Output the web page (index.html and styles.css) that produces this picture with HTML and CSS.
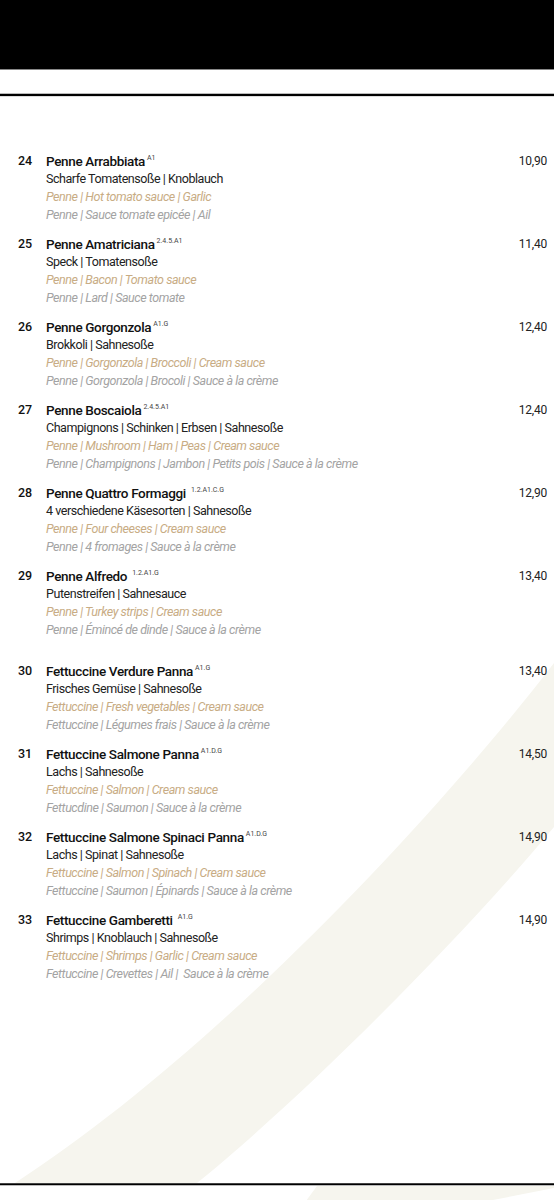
FILE: index.html
```html
<!DOCTYPE html>
<html lang="de">
<head>
    <meta charset="UTF-8">
    <meta name="viewport" content="width=device-width, initial-scale=1.0">
    <title>Pasta</title>
    <link rel="stylesheet" href="styles.css">
</head>
<body>
    <div class="page">
        <svg class="swoosh" width="554" height="1220" viewBox="0 0 554 1220" aria-hidden="true">
            <path d="M554,663 C434,819 215,1053 15,1183 L197,1183 C300,1100 460,940 554,827 Z" fill="#f6f5ee"/>
            <path d="M317,1186 L554,1186 L554,1188 L493,1200 L488,1220 L292,1220 Z" fill="#f6f5ee"/>
        </svg>

        <header class="topbar"></header>
        <div class="rule"></div>

        <main class="menu">
            <section class="group">
                <div class="dish">
                    <span class="num">24</span>
                    <div class="info">
                        <h3 class="name">Penne Arrabbiata<sup>A1</sup></h3>
                        <p class="de">Scharfe Tomatensoße | Knoblauch</p>
                        <p class="en">Penne | Hot tomato sauce | Garlic</p>
                        <p class="fr">Penne | Sauce tomate epicée | Ail</p>
                    </div>
                    <span class="price">10,90</span>
                </div>
                <div class="dish">
                    <span class="num">25</span>
                    <div class="info">
                        <h3 class="name">Penne Amatriciana<sup>2.4.5.A1</sup></h3>
                        <p class="de">Speck | Tomatensoße</p>
                        <p class="en">Penne | Bacon | Tomato sauce</p>
                        <p class="fr">Penne | Lard | Sauce tomate</p>
                    </div>
                    <span class="price">11,40</span>
                </div>
                <div class="dish">
                    <span class="num">26</span>
                    <div class="info">
                        <h3 class="name">Penne Gorgonzola<sup>A1.G</sup></h3>
                        <p class="de">Brokkoli | Sahnesoße</p>
                        <p class="en">Penne | Gorgonzola | Broccoli | Cream sauce</p>
                        <p class="fr">Penne | Gorgonzola | Brocoli | Sauce à la crème</p>
                    </div>
                    <span class="price">12,40</span>
                </div>
                <div class="dish">
                    <span class="num">27</span>
                    <div class="info">
                        <h3 class="name">Penne Boscaiola<sup>2.4.5.A1</sup></h3>
                        <p class="de">Champignons | Schinken | Erbsen | Sahnesoße</p>
                        <p class="en">Penne | Mushroom | Ham | Peas | Cream sauce</p>
                        <p class="fr">Penne | Champignons | Jambon | Petits pois | Sauce à la crème</p>
                    </div>
                    <span class="price">12,40</span>
                </div>
                <div class="dish">
                    <span class="num">28</span>
                    <div class="info">
                        <h3 class="name">Penne Quattro Formaggi <sup>1.2.A1.C.G</sup></h3>
                        <p class="de">4 verschiedene Käsesorten | Sahnesoße</p>
                        <p class="en">Penne | Four cheeses | Cream sauce</p>
                        <p class="fr">Penne | 4 fromages | Sauce à la crème</p>
                    </div>
                    <span class="price">12,90</span>
                </div>
                <div class="dish">
                    <span class="num">29</span>
                    <div class="info">
                        <h3 class="name">Penne Alfredo <sup>1.2.A1.G</sup></h3>
                        <p class="de">Putenstreifen | Sahnesauce</p>
                        <p class="en">Penne | Turkey strips | Cream sauce</p>
                        <p class="fr">Penne | Émincé de dinde | Sauce à la crème</p>
                    </div>
                    <span class="price">13,40</span>
                </div>
            </section>

            <section class="group">
                <div class="dish">
                    <span class="num">30</span>
                    <div class="info">
                        <h3 class="name">Fettuccine Verdure Panna<sup>A1.G</sup></h3>
                        <p class="de">Frisches Gemüse | Sahnesoße</p>
                        <p class="en">Fettuccine | Fresh vegetables | Cream sauce</p>
                        <p class="fr">Fettuccine | Légumes frais | Sauce à la crème</p>
                    </div>
                    <span class="price">13,40</span>
                </div>
                <div class="dish">
                    <span class="num">31</span>
                    <div class="info">
                        <h3 class="name">Fettuccine Salmone Panna<sup>A1.D.G</sup></h3>
                        <p class="de">Lachs | Sahnesoße</p>
                        <p class="en">Fettuccine | Salmon | Cream sauce</p>
                        <p class="fr">Fettucdine | Saumon | Sauce à la crème</p>
                    </div>
                    <span class="price">14,50</span>
                </div>
                <div class="dish">
                    <span class="num">32</span>
                    <div class="info">
                        <h3 class="name">Fettuccine Salmone Spinaci Panna<sup>A1.D.G</sup></h3>
                        <p class="de">Lachs | Spinat | Sahnesoße</p>
                        <p class="en">Fettuccine | Salmon | Spinach | Cream sauce</p>
                        <p class="fr">Fettuccine | Saumon | Épinards | Sauce à la crème</p>
                    </div>
                    <span class="price">14,90</span>
                </div>
                <div class="dish">
                    <span class="num">33</span>
                    <div class="info">
                        <h3 class="name">Fettuccine Gamberetti <sup>A1.G</sup></h3>
                        <p class="de">Shrimps | Knoblauch | Sahnesoße</p>
                        <p class="en">Fettuccine | Shrimps | Garlic | Cream sauce</p>
                        <p class="fr">Fettuccine | Crevettes | Ail |&nbsp; Sauce à la crème</p>
                    </div>
                    <span class="price">14,90</span>
                </div>
            </section>
        </main>

        <div class="rule rule-bottom"></div>
        <div class="next"></div>
    </div>
</body>
</html>
```

FILE: styles.css
```css
body {
    margin: 0;
    background: #fff;
    font-family: Roboto, "Liberation Sans", sans-serif;
    color: #1a1a1a;
}
.page {
    position: relative;
    width: 554px;
    overflow: hidden;
}
.swoosh {
    position: absolute;
    top: 0;
    left: 0;
    z-index: 0;
}
.topbar, .rule, .menu, .next {
    position: relative;
    z-index: 1;
}
.topbar {
    height: 69px;
    background: #000;
    border-bottom: 1px solid #888;
    margin-bottom: 23px;
}
.rule {
    height: 2px;
    background: #000;
    border-top: 1px solid #bbb;
    border-bottom: 1px solid #ddd;
}
.rule-bottom {
    height: 1px;
    border-top: 1px solid #444;
    border-bottom: 1px solid #bbb;
}
.next {
    height: 40px;
}
.menu {
    padding: 55px 7px 200px 18px;
}
.group + .group {
    margin-top: 23px;
}
.dish {
    display: grid;
    grid-template-columns: 28px 1fr auto;
    line-height: 18px;
    margin-bottom: 11px;
}
.group:last-child .dish:last-child {
    margin-bottom: 0;
}
.num {
    font-size: 12.5px;
    font-weight: 500;
    color: #111;
}
.name {
    margin: 0;
    font-size: 13.5px;
    font-weight: 500;
    letter-spacing: -0.35px;
    color: #111;
}
.name sup {
    font-size: 7px;
    font-weight: normal;
    letter-spacing: 0;
    vertical-align: 6px;
    line-height: 0;
    margin-left: 2px;
    color: #444;
}
.info p {
    margin: 0;
    font-size: 12.5px;
    letter-spacing: -0.45px;
}
.de {
    color: #222;
}
.en {
    font-style: italic;
    color: #c8ac84;
}
.fr {
    font-style: italic;
    color: #a3a3a3;
}
.price {
    font-size: 12px;
    letter-spacing: -0.2px;
    color: #222;
}
```
